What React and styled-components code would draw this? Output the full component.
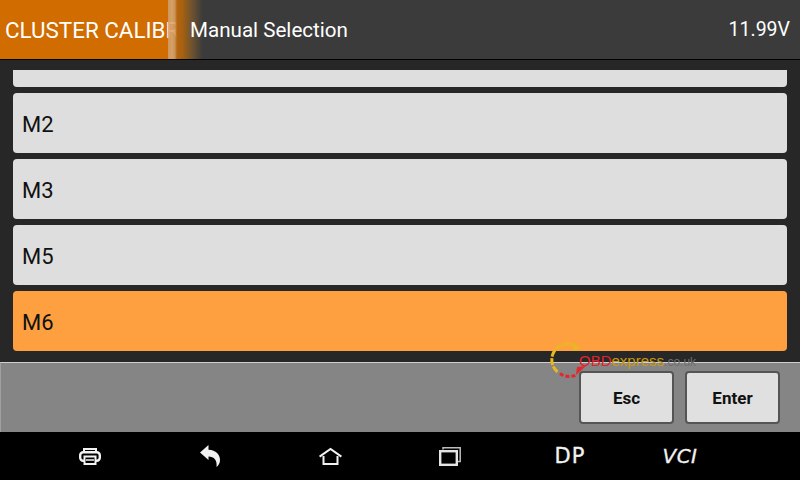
import React from 'react';
import styled, { createGlobalStyle } from 'styled-components';

const GlobalStyle = createGlobalStyle`
  html, body {
    margin: 0;
    padding: 0;
    background: #000;
    font-family: Roboto, "Liberation Sans", sans-serif;
  }
`;

const Screen = styled.div`
  position: relative;
  width: 800px;
  height: 480px;
  display: flex;
  flex-direction: column;
  overflow: hidden;
`;

const Header = styled.header`
  height: 59px;
  display: flex;
  align-items: center;
  flex-shrink: 0;
  background: #3b3b3b;
  border-bottom: 1px solid #000;
  color: #fff;
  font-size: 20.6px;
`;

const Tab = styled.div`
  position: relative;
  width: 168px;
  height: 100%;
  flex-shrink: 0;
  display: flex;
  align-items: center;
  padding-left: 5px;
  box-sizing: border-box;
  background: #d06c00;
  white-space: nowrap;
  font-size: 22.4px;
`;

const TabText = styled.span`
  display: block;
  width: 176px;
  overflow: hidden;
  flex-shrink: 0;
`;

const TabFade = styled.div`
  position: absolute;
  top: 0;
  left: 168px;
  width: 34px;
  height: 100%;
  background: linear-gradient(
    90deg,
    rgba(222, 160, 96, 0.9) 0,
    rgba(226, 170, 110, 0.92) 4px,
    rgba(220, 155, 88, 0.9) 7px,
    #b5650f 9px,
    #a8610f 14px,
    #6e5330 24px,
    #3f3c39 34px
  );
`;

const Title = styled.div`
  position: relative;
  margin-left: 22px;
  flex: 1;
`;

const Voltage = styled.div`
  margin-right: 10px;
  font-size: 19.5px;
`;

const List = styled.main`
  height: 302px;
  flex-shrink: 0;
  box-sizing: border-box;
  padding: 10px 13px 0;
  display: flex;
  flex-direction: column;
  gap: 6px;
  background: #272727;
`;

const ClippedRow = styled.div`
  height: 17px;
  flex-shrink: 0;
  background: #dedede;
  border-radius: 0 0 4px 4px;
`;

const Row = styled.div`
  height: 60px;
  flex-shrink: 0;
  display: flex;
  align-items: center;
  padding-left: 9px;
  padding-top: 2px;
  box-sizing: border-box;
  border-radius: 4px;
  font-size: 22px;
  color: #111;
  background: ${props => (props.$active ? '#ffa040' : '#dedede')};
`;

const Footer = styled.div`
  height: 70px;
  flex-shrink: 0;
  box-sizing: border-box;
  border-top: 1px solid #cfcfcf;
  border-left: 1px solid #a0a0a0;
  display: flex;
  justify-content: flex-end;
  gap: 11px;
  padding: 8px 20px 0 0;
  background: #858585;
`;

const Button = styled.button`
  width: 95px;
  height: 53px;
  box-sizing: border-box;
  padding: 0;
  border: 2px solid #555;
  border-radius: 4px;
  background: #e0e0e0;
  color: #111;
  font-family: inherit;
  font-size: 17px;
  font-weight: 700;
`;

const NavBar = styled.nav`
  height: 48px;
  flex-shrink: 0;
  display: grid;
  grid-template-columns: repeat(5, 120px) 100px;
  padding-left: 30px;
  align-items: center;
  background: #000;
  color: #f2f2f2;
`;

const NavItem = styled.div`
  display: flex;
  justify-content: center;
  align-items: center;
  height: 24px;
`;

const NavIcon = styled.svg`
  display: block;
  overflow: visible;
`;

const DpLabel = styled.span`
  font-family: "DejaVu Sans", sans-serif;
  font-size: 21px;
  letter-spacing: 1px;
  -webkit-text-stroke: 0.3px #f2f2f2;
`;

const VciLabel = styled.span`
  font-family: "DejaVu Sans", sans-serif;
  font-size: 20px;
  font-style: italic;
  letter-spacing: 0.5px;
  -webkit-text-stroke: 0.3px #f2f2f2;
`;

const Watermark = styled.div`
  position: absolute;
  left: 550px;
  top: 342px;
  pointer-events: none;
`;

const MarkText = styled.span`
  position: absolute;
  left: 29px;
  top: 10px;
  font-family: "Liberation Sans", sans-serif;
  font-size: 15px;
  line-height: 17px;
  white-space: nowrap;
  color: #e0242c;
`;

const MarkGold = styled.span`
  color: #c99a10;
`;

const MarkGrey = styled.span`
  color: #6f6f6f;
  font-size: 12px;
`;

const PrintIcon = () => (
  <NavIcon width="22" height="17" viewBox="0 0 22 17">
    <path d="M5 4V1h12v3" fill="none" stroke="#f2f2f2" strokeWidth="2" />
    <rect x="1.200" y="4.200" width="19.600" height="8.600" rx="3" fill="none" stroke="#f2f2f2" strokeWidth="2.400" />
    <rect x="5.500" y="8.500" width="11" height="7.500" fill="#000" stroke="#f2f2f2" strokeWidth="2" />
    <path d="M7 12h8" stroke="#f2f2f2" strokeWidth="1.500" />
  </NavIcon>
);

const BackIcon = () => (
  <NavIcon width="20" height="22" viewBox="0 0 20 22">
    <path d="M0 7.500 8.500 0v4.800c7.500.2 11.500 5 11.500 10.200 0 3-1.500 5.500-3.500 7 1-6.500-2.500-10.500-8-10.500V15Z" fill="#f2f2f2" />
  </NavIcon>
);

const HomeIcon = () => (
  <NavIcon width="23" height="17" viewBox="0 0 23 17">
    <path d="M.6 8.600 11.500 1l10.900 7.600" fill="none" stroke="#f2f2f2" strokeWidth="2" />
    <path d="M4.500 8v8h14V8" fill="none" stroke="#f2f2f2" strokeWidth="2" />
  </NavIcon>
);

const RecentIcon = () => (
  <NavIcon width="22" height="19" viewBox="0 0 22 19">
    <path d="M4 2.500V.8h17.200V14.500H19" fill="none" stroke="#bdbdbd" strokeWidth="1.500" />
    <rect x="1.200" y="4.200" width="16.600" height="13.600" fill="none" stroke="#e4e4e4" strokeWidth="2.400" />
  </NavIcon>
);

const WatermarkRing = () => (
  <NavIcon width="36" height="36" viewBox="0 0 36 36">
    <path d="M7.500 30A16 16 0 0 1 24 3" fill="none" stroke="#e8b820" strokeWidth="3" strokeDasharray="7 1.500" />
    <path d="M23 1l7.500 5-7 3Z" fill="#e8b820" />
    <path d="M10 31.500a16 16 0 0 0 17 1" fill="none" stroke="#e6262c" strokeWidth="3" strokeDasharray="4 2" />
    <path d="M26 33l1-8 9-1Z" fill="#e6262c" />
  </NavIcon>
);

const rows = ['M2', 'M3', 'M5'];

export default function App() {
  return (
    <Screen>
      <GlobalStyle />
      <Header>
        <Tab>
          <TabText>CLUSTER CALIBR</TabText>
          <TabFade />
        </Tab>
        <Title>Manual Selection</Title>
        <Voltage>11.99V</Voltage>
      </Header>
      <List>
        <ClippedRow />
        {rows.map(row => (
          <Row key={row}>{row}</Row>
        ))}
        <Row $active>M6</Row>
      </List>
      <Footer>
        <Button>Esc</Button>
        <Button>Enter</Button>
      </Footer>
      <NavBar>
        <NavItem><PrintIcon /></NavItem>
        <NavItem><BackIcon /></NavItem>
        <NavItem><HomeIcon /></NavItem>
        <NavItem><RecentIcon /></NavItem>
        <NavItem><DpLabel>DP</DpLabel></NavItem>
        <NavItem><VciLabel>VCI</VciLabel></NavItem>
      </NavBar>
      <Watermark>
        <WatermarkRing />
        <MarkText>OBD<MarkGold>express</MarkGold><MarkGrey>.co.uk</MarkGrey></MarkText>
      </Watermark>
    </Screen>
  );
}
